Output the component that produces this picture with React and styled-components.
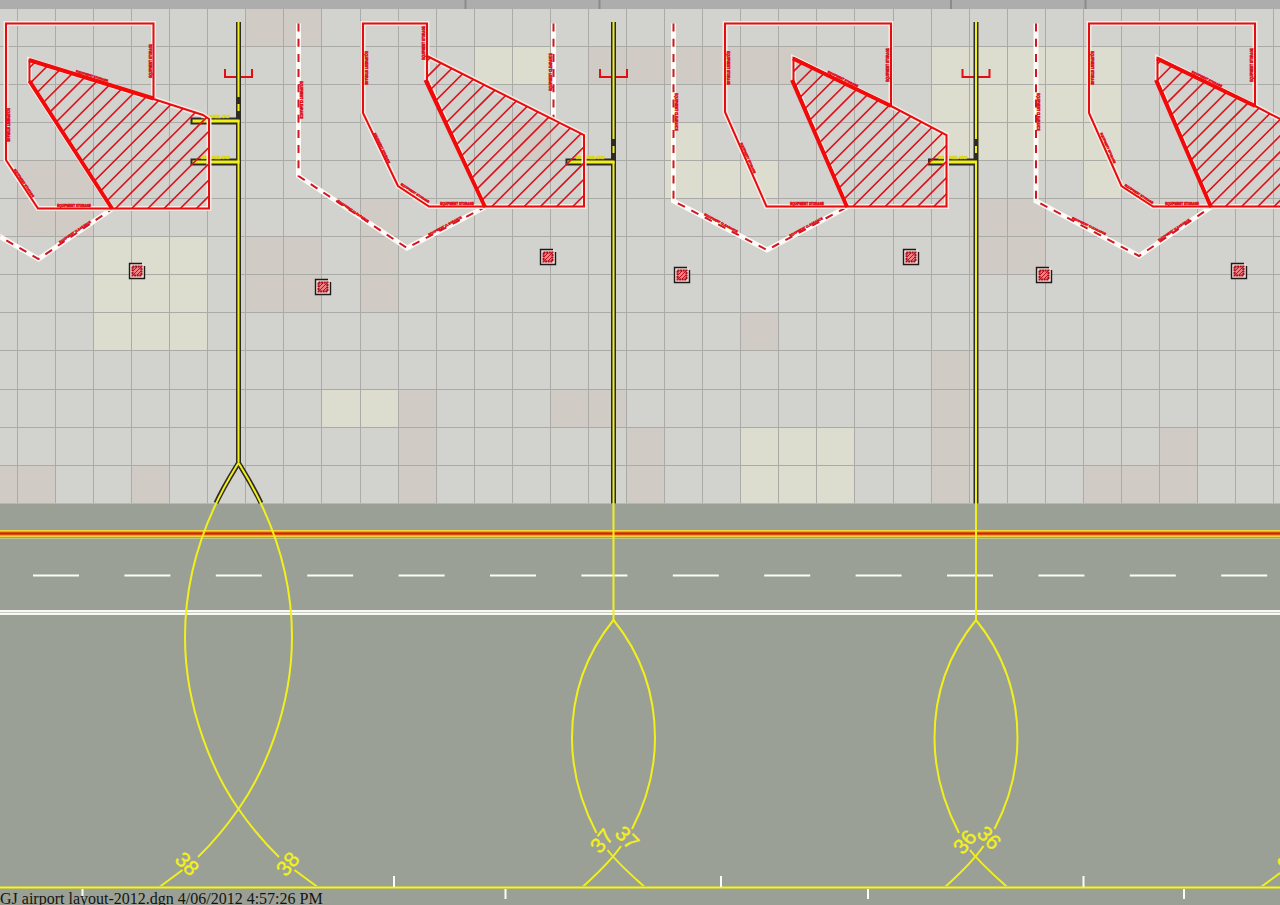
import React from "react";
import styled, { createGlobalStyle } from "styled-components";

const GlobalStyle = createGlobalStyle`
  body {
    margin: 0;
    background: #9aa095;
  }
`;

const Sheet = styled.figure`
  position: relative;
  margin: 0;
  overflow: hidden;
`;

const Plan = styled.svg`
  display: block;
  width: 100%;
  height: auto;
`;

const SheetCaption = styled.figcaption`
  position: absolute;
  left: 0;
  bottom: -3px;
  font-family: "Liberation Serif", serif;
  font-size: 16px;
  line-height: 18px;
  white-space: nowrap;
  color: #14140f;
`;

const Tile = styled.rect`
  fill: ${({ $tone }) => ($tone === "cream" ? "#dcdccf" : "#d0ccc5")};
`;

const GridLine = styled.path`
  fill: none;
  stroke: #aaaba7;
  stroke-width: 1px;
`;

const Stroke = styled.path`
  fill: none;
  stroke: ${({ $color }) => $color};
  stroke-width: ${({ $width }) => $width}px;
  stroke-dasharray: ${({ $dash }) => $dash || "none"};
`;

const Note = styled.text`
  font-family: "Liberation Sans", sans-serif;
  font-size: 3px;
  font-weight: 700;
  text-anchor: middle;
  fill: ${({ $color }) => $color};
  stroke: ${({ $color }) => $color};
  stroke-width: 0.5px;
`;

const StandNumber = styled.text`
  font-family: "Liberation Sans", sans-serif;
  font-size: 21px;
  text-anchor: middle;
  fill: #f3f01c;
  stroke: #f3f01c;
  stroke-width: 0.4px;
`;

const RED = "#e40d12";
const SIGNAL = "#f00a0a";
const DASH_RED = "#d01822";
const HALO = "#fbe9e2";
const YELLOW = "#f2f01c";
const BLACK = "#2e2a24";

const CELL = 38.07;
const GRID_X = 17.4;
const GRID_Y = 46.4;

// [tone, column, row, columns, rows]
const tiles = [
  ["cream", 2, 5, 3, 3],
  ["cream", 8, 9, 2, 1],
  ["cream", 19, 10, 3, 2],
  ["cream", 12, 0, 2, 1],
  ["cream", 24, 0, 5, 3],
  ["cream", 28, 3, 1, 1],
  ["cream", 17, 2, 1, 1],
  ["cream", 17, 3, 3, 1],
  ["pink", 6, -1, 2, 1],
  ["pink", 0, 3, 2, 2],
  ["pink", 13, 2, 1, 1],
  ["pink", 15, 0, 6, 1],
  ["pink", 9, 4, 1, 3],
  ["pink", 6, 5, 2, 2],
  ["pink", 10, 9, 1, 3],
  ["pink", 14, 9, 2, 1],
  ["pink", 16, 10, 1, 2],
  ["pink", -1, 11, 2, 1],
  ["pink", 3, 11, 1, 1],
  ["pink", 19, 7, 1, 1],
  ["pink", 24, 8, 1, 4],
  ["pink", 25, 4, 2, 2],
  ["pink", 28, 11, 3, 1],
  ["pink", 30, 10, 1, 1],
];

const storage = "EQUIPMENT STORAGE";
const clearance = "EQUIPMENT CLEARANCE";

const stands = [
  {
    id: "a",
    storage: "M153.5 98V23.5H6V160L38 208.5H112",
    hatch: "M29.5 60L153.5 99L203 115L209 119V208.5H112L29.5 82Z",
    phase: 324,
    heavy: "M29 60L153.5 98.500M29.500 81L112 208.500",
    clear: ["M-20 225L38.500 259L112 209"],
    notes: [
      [storage, 8, 125, 90],
      [storage, 24, 183, 56],
      [storage, 74, 206, 0],
      [storage, 151, 61, -90],
      [storage, 92, 76, 17],
      [clearance, 75, 232, -34],
    ],
  },
  {
    id: "b",
    storage: "M427 80V23.500H363V113L398 186L429 206.500H485",
    hatch: "M427 56L584 135V206.500H485L427 80Z",
    phase: 698.4,
    heavy: "M425.500 80L485 207",
    clear: ["M298.500 23.500V176L407 248L485 207", "M553.500 23.500V118"],
    notes: [
      [storage, 366, 68, 90],
      [storage, 382, 148, 64],
      [storage, 415, 193, 33],
      [storage, 457, 204, 0],
      [storage, 424, 43, -90],
      [clearance, 301, 100, 90],
      [clearance, 353, 211, 34],
      [clearance, 445, 226, -28],
      [clearance, 551, 72, -90],
    ],
  },
  {
    id: "c",
    storage: "M891 106V23.500H725V112L766.500 206.500H847",
    hatch: "M793.500 58L891 106L946.500 135V206.500H847L793.500 81Z",
    phase: 1075.6,
    heavy: "M793 58.500L891 106M792 80L847 207",
    clear: ["M673.500 23.500V201L767 250L847 207"],
    notes: [
      [storage, 728, 68, 90],
      [storage, 748, 158, 66],
      [storage, 807, 204, 0],
      [storage, 888, 65, -90],
      [storage, 843, 79, 26],
      [clearance, 676, 112, 90],
      [clearance, 721, 223, 28],
      [clearance, 806, 227, -28],
    ],
  },
  {
    id: "d",
    storage: "M1255 106V23.500H1089V113L1121.500 186L1153 206.500H1211",
    hatch: "M1157.500 58L1255 106L1311 135V206.500H1211L1157.500 81Z",
    phase: 1432,
    heavy: "M1157 58.500L1255 106M1156 80L1211 207",
    clear: ["M1036 23.500V201L1139 256L1211 207"],
    notes: [
      [storage, 1092, 68, 90],
      [storage, 1108, 148, 66],
      [storage, 1139, 194, 33],
      [storage, 1182, 204, 0],
      [storage, 1252, 65, -90],
      [storage, 1207, 79, 26],
      [clearance, 1038, 112, 90],
      [clearance, 1089, 226, 26],
      [clearance, 1174, 230, -34],
    ],
  },
];

const leadIns = [
  { x: 238.5, end: 465, top: 97, arms: [121, 162] },
  { x: 613.5, end: 503.5, top: 139, arms: [162] },
  { x: 976, end: 503.5, top: 139, arms: [162] },
];

const pits = [
  [137, 271],
  [323, 287],
  [548, 257],
  [682, 275],
  [911, 257],
  [1044, 275],
  [1239, 271],
];

const numbers = [
  ["38", 187, 864, 46],
  ["38", 288, 864, -50],
  ["37", 602, 841, -50],
  ["37", 627, 838, 46],
  ["36", 965, 842, -50],
  ["36", 989, 838, 46],
  ["35", 1289, 864, 46],
];

function hatchLines(phase) {
  let d = "";
  for (let k = -22; k < 14; k += 1) {
    const c = phase + k * 16.2;
    d += `M${c - 215} 215L${c - 50} 50`;
  }
  return d;
}

function Apron() {
  let grid = "";
  for (let c = 0; c < 34; c += 1) {
    grid += `M${Math.floor(GRID_X + c * CELL) + 0.5} 9V503`;
  }
  for (let r = 0; r < 12; r += 1) {
    grid += `M0 ${Math.floor(GRID_Y + r * CELL) + 0.5}H1280`;
  }
  return (
    <g>
      <rect y="8" width="1280" height="496" fill="#d2d3ce" />
      {tiles.map(([tone, c, r, w, h]) => (
        <Tile
          key={`${c}-${r}`}
          $tone={tone}
          x={GRID_X + c * CELL}
          y={GRID_Y + r * CELL}
          width={w * CELL}
          height={h * CELL}
        />
      ))}
      <rect width="1280" height="9" fill="#adadad" />
      <Stroke $color="#8b8b8b" $width={2} d="M465.500 0V9M599.500 0V9M951 0V9M1085.500 0V9" />
      <GridLine d={grid} />
    </g>
  );
}

function Road() {
  return (
    <g>
      <rect y="503.500" width="1280" height="402" fill="#9aa095" />
      <Stroke $color="#bfc48e" $width={1} d="M0 538.500H1280" />
      <Stroke $color="#f3d43c" $width={7} d="M0 533.500H1280" />
      <Stroke $color="#e87a1c" $width={4} d="M0 533.500H1280" />
      <Stroke $color="#c92404" $width={2} d="M0 533.500H1280" />
      <Stroke $color="#fbfbf8" $width={2} $dash="46 45.400" d="M33 575.500H1280" />
      <Stroke $color="#c8cbc4" $width={5} d="M0 612.500H1280" />
      <Stroke $color="#f7f7f4" $width={2} d="M0 611H1280M0 614H1280" />
    </g>
  );
}

function Stand({ stand }) {
  return (
    <g>
      {stand.clear.map((d) => (
        <g key={d}>
          <Stroke $color="#fdfaf8" $width={5} d={d} />
          <Stroke $color={DASH_RED} $width={2} $dash="8 7.200" d={d} />
        </g>
      ))}
      <Stroke $color={HALO} $width={5} d={stand.storage} />
      <Stroke $color={HALO} $width={5} d={stand.hatch} />
      <Stroke $color={RED} $width={2} d={stand.storage} />
      <clipPath id={`stand-${stand.id}`}>
        <path d={stand.hatch} />
      </clipPath>
      <g clipPath={`url(#stand-${stand.id})`}>
        <Stroke $color="#da141c" $width={1.6} d={hatchLines(stand.phase)} />
      </g>
      <Stroke $color={RED} $width={2} d={stand.hatch} />
      <Stroke $color={SIGNAL} $width={4} d={stand.heavy} />
      {stand.notes.map(([label, x, y, angle]) => (
        <Note key={`${x}-${y}`} $color="#dc141c" transform={`translate(${x} ${y}) rotate(${angle})`} y="1">
          {label}
        </Note>
      ))}
    </g>
  );
}

function StopBars({ x, arms }) {
  return arms.map((y) => (
    <g key={y}>
      <Stroke $color={BLACK} $width={7} d={`M${x - 48} ${y}H${x + 1}`} />
      <Stroke $color={YELLOW} $width={3} d={`M${x - 46} ${y}H${x + 1}`} />
      <Note $color="#dcd822" x={x - 23} y={y - 3}>
        NOSE WHEEL STOP
      </Note>
    </g>
  ));
}

function LeadIn({ x, end, top, arms }) {
  return (
    <g>
      <Stroke $color={RED} $width={2} d={`M${x - 13.5} 69V77H${x + 13.5}V69`} />
      <Stroke $color={BLACK} $width={5} d={`M${x} 22V${end}`} />
      <StopBars x={x} arms={arms} />
      <Stroke
        $color={YELLOW}
        $width={2}
        d={`M${x} 22V${top}M${x} ${top + 7}V${top + 14}M${x} ${arms[0] - 1}V${end}`}
      />
    </g>
  );
}

function Pit({ x, y }) {
  return (
    <g transform={`translate(${x} ${y})`}>
      <rect x="-7" y="-7" width="14" height="14" fill="#f3dcd8" />
      <Stroke $color="#1d1a1a" $width={1.4} d="M5 -7.500H-7.500V7.500H7.500V-5" />
      <rect x="-5" y="-5" width="10" height="10" fill="#ee8084" />
      <Stroke $color="#c4101c" $width={1} d="M-4 0L0 -4M-4 4L4 -4M0 4L4 0" />
      <Stroke $color="#a80f1c" $width={2} $dash="2 0.600" d="M-4.500 -4.500H4.500V4.500H-4.500Z" />
    </g>
  );
}

function Loop({ x }) {
  return (
    <g transform={`translate(${x} 0)`}>
      <Stroke $color={YELLOW} $width={2} d="M0 503V620" />
      <Stroke
        $color={YELLOW}
        $width={2}
        d="M0 620C-17 641 -41.500 680 -41.500 738C-41.500 775 -30 808 -17 833M-6 850C4 863 19 876 31 887"
      />
      <Stroke
        $color={YELLOW}
        $width={2}
        d="M0 620C17 641 41.500 680 41.500 738C41.500 775 31 805 18.500 829M7.500 846C-4 863 -19 876 -31 887"
      />
    </g>
  );
}

function Taxiway() {
  const branch =
    "M0 463C-10.500 480 -53.500 545 -53.500 637C-53.500 710 -24 775 0 809C14 829 27 844 40.500 857M56 870L79 887";
  const stub = "M0 463C-6 473 -14 485 -22.500 503";
  return (
    <g>
      {[1, -1].map((side) => (
        <g key={side} transform={`translate(238.500 0) scale(${side} 1)`}>
          <Stroke $color={BLACK} $width={5} d={stub} />
        </g>
      ))}
      {[1, -1].map((side) => (
        <g key={side} transform={`translate(238.500 0) scale(${side} 1)`}>
          <Stroke $color={YELLOW} $width={2} d={branch} />
        </g>
      ))}
      <Loop x={613.5} />
      <Loop x={976} />
      <Stroke $color={YELLOW} $width={2} d="M1261 887L1280 873" />
      <Stroke $color="#c9cb4e" $width={3} d="M0 887.500H1280" />
      <Stroke $color="#f3f04a" $width={1} d="M0 887.500H1280" />
      <Stroke
        $color="#fbfbf8"
        $width={2}
        d="M394 876V887M721 876V887M1083.500 876V887M82.500 889V899M505.500 889V899M868 889V899M1184 889V899"
      />
      {numbers.map(([label, x, y, angle]) => (
        <StandNumber key={x} transform={`translate(${x} ${y}) rotate(${angle})`} y="7">
          {label}
        </StandNumber>
      ))}
    </g>
  );
}

export default function App() {
  return (
    <main>
      <GlobalStyle />
      <Sheet>
        <Plan viewBox="0 0 1280 905" role="img" aria-label="Airport apron layout">
          <Apron />
          <Road />
          {leadIns.map((line) => (
            <LeadIn key={line.x} {...line} />
          ))}
          {stands.map((stand) => (
            <Stand key={stand.id} stand={stand} />
          ))}
          {pits.map(([x, y]) => (
            <Pit key={x} x={x} y={y} />
          ))}
          <Taxiway />
        </Plan>
        <SheetCaption>GJ airport layout-2012.dgn 4/06/2012 4:57:26 PM</SheetCaption>
      </Sheet>
    </main>
  );
}
